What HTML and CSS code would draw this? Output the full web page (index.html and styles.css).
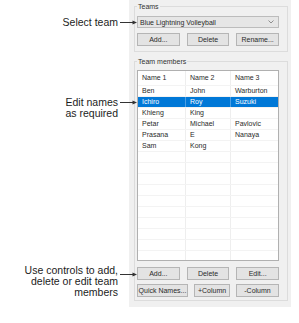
FILE: index.html
```html
<!DOCTYPE html>
<html lang="en">
<head>
<meta charset="UTF-8">
<title>Team members</title>
<link rel="stylesheet" href="styles.css">
</head>
<body>
<div class="figure">
    <div class="notes">
        <div class="note note-team">
            <span class="note-text">Select team</span>
            <svg class="arrow" width="17" height="11" viewBox="0 0 17 11"><line x1="0" y1="5.5" x2="14" y2="5.5"/><polygon points="12.5,3.5 17,5.5 12.5,7.5"/></svg>
        </div>
        <div class="note note-edit">
            <span class="note-text">Edit names<br>as required</span>
            <svg class="arrow" width="17" height="11" viewBox="0 0 17 11"><line x1="0" y1="5.5" x2="14" y2="5.5"/><polygon points="12.5,3.5 17,5.5 12.5,7.5"/></svg>
        </div>
        <div class="note note-controls">
            <span class="note-text">Use controls to add,<br>delete or edit team<br>members</span>
            <svg class="arrow arrow-low" width="17" height="11" viewBox="0 0 17 11"><line x1="0" y1="5.5" x2="14" y2="5.5"/><polygon points="12.5,3.5 17,5.5 12.5,7.5"/></svg>
        </div>
    </div>

    <div class="panel">
        <fieldset class="group group-teams">
            <legend>Teams</legend>
            <div class="combo">
                <span>Blue Lightning Volleyball</span>
                <svg class="chevron" width="6" height="4" viewBox="0 0 6 4"><polyline points="0.5,0.5 3,3 5.5,0.5"/></svg>
            </div>
            <div class="btn-row">
                <button>Add...</button>
                <button>Delete</button>
                <button>Rename...</button>
            </div>
        </fieldset>

        <fieldset class="group group-members">
            <legend>Team members</legend>
            <div class="list">
                <div class="list-row list-head"><span>Name 1</span><span>Name 2</span><span>Name 3</span></div>
                <div class="list-row"><span>Ben</span><span>John</span><span>Warburton</span></div>
                <div class="list-row selected"><span>Ichiro</span><span>Roy</span><span>Suzuki</span></div>
                <div class="list-row"><span>Khieng</span><span>King</span><span></span></div>
                <div class="list-row"><span>Petar</span><span>Michael</span><span>Pavlovic</span></div>
                <div class="list-row"><span>Prasana</span><span>E</span><span>Nanaya</span></div>
                <div class="list-row"><span>Sam</span><span>Kong</span><span></span></div>
                <div class="list-row"><span></span><span></span><span></span></div>
                <div class="list-row"><span></span><span></span><span></span></div>
                <div class="list-row"><span></span><span></span><span></span></div>
                <div class="list-row"><span></span><span></span><span></span></div>
                <div class="list-row"><span></span><span></span><span></span></div>
                <div class="list-row"><span></span><span></span><span></span></div>
                <div class="list-row"><span></span><span></span><span></span></div>
                <div class="list-row"><span></span><span></span><span></span></div>
                <div class="list-row"><span></span><span></span><span></span></div>
                <div class="list-row"><span></span><span></span><span></span></div>
            </div>
            <div class="btn-row btn-row-edit">
                <button>Add...</button>
                <button>Delete</button>
                <button>Edit...</button>
            </div>
            <div class="btn-row btn-row-extra">
                <button>Quick Names...</button>
                <button>+Column</button>
                <button>-Column</button>
            </div>
        </fieldset>
    </div>
</div>
</body>
</html>
```

FILE: styles.css
```css
body {
  margin: 0;
  background-color: #fff;
  font-family: 'Liberation Sans', Arial, sans-serif;
}
.figure {
  display: flex;
  align-items: flex-start;
}

/* callouts */
.notes {
  position: relative;
  z-index: 1;
  width: 137px;
  flex: none;
  display: flex;
  flex-direction: column;
}
.note {
  display: flex;
  justify-content: flex-end;
  align-items: flex-start;
}
.note-text {
  font-size: 10.5px;
  line-height: 11px;
  color: #1c1c1c;
  text-align: right;
}
.arrow {
  flex: none;
  margin-left: 2px;
}
.arrow line {
  stroke: #333;
  stroke-width: 1;
}
.arrow polygon {
  fill: #333;
}
.arrow-low {
  margin-top: 4px;
}
.note-team {
  margin-top: 17px;
}
.note-edit {
  margin-top: 69px;
}
.note-controls {
  margin-top: 146px;
}

/* dialog panel */
.panel {
  box-sizing: border-box;
  width: 162px;
  height: 307px;
  margin-left: -8px;
  padding: 2px 3px 0 5px;
  background-color: #f0f0f0;
  font-size: 7px;
  color: #2a2a2a;
}
.group {
  margin: 0;
  padding: 0 8px 5px 2px;
  border: 1px solid #dcdcdc;
  min-inline-size: 0;
}
.group legend {
  padding: 0 1px;
  line-height: 9px;
  color: #333;
}
.group-members {
  margin-top: 5px;
  padding-bottom: 3px;
}
.combo {
  box-sizing: border-box;
  height: 12px;
  margin-top: 5px;
  padding: 0 4px 0 2px;
  display: flex;
  align-items: center;
  justify-content: space-between;
  background-color: #e6e6e6;
  border: 1px solid #bcbcbc;
}
.chevron polyline {
  fill: none;
  stroke: #777;
  stroke-width: 0.8;
}
.btn-row {
  display: grid;
  grid-template-columns: repeat(3, 1fr);
  column-gap: 7px;
  margin-top: 5px;
}
.btn-row button {
  box-sizing: border-box;
  height: 13px;
  padding: 0;
  font-family: inherit;
  font-size: 7px;
  color: #2a2a2a;
  background-color: #e3e3e3;
  border: 1px solid #b5b5b5;
  border-radius: 0;
}
.btn-row-edit {
  margin-top: 6px;
}
.btn-row-extra {
  grid-template-columns: 51px 36px 43px;
  column-gap: 6px;
  margin-top: 4px;
}

/* list view */
.list {
  box-sizing: border-box;
  height: 191px;
  margin-top: 4px;
  overflow: hidden;
  background-color: #fff;
  border: 1px solid #b0b0b0;
}
.list-row {
  box-sizing: border-box;
  display: grid;
  grid-template-columns: 48px 45px 47px;
  height: 11px;
  border-bottom: 1px solid #f3f3f3;
}
.list-row span {
  padding-left: 4px;
  line-height: 10px;
  border-right: 1px solid #eeeeee;
  white-space: nowrap;
}
.list-row span:last-child {
  border-right: none;
}
.list-head {
  height: 15px;
}
.list-head span {
  line-height: 14px;
}
.selected {
  background-color: #0078d7;
  color: #fff;
}
.selected span {
  border-right-color: #4d9fe3;
}
```
